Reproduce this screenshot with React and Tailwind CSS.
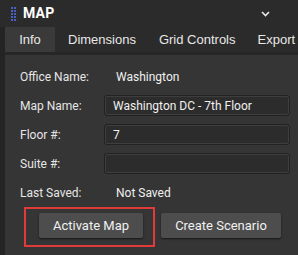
import React from "react";

function Grip() {
  const dots = [];
  for (let r = 0; r < 5; r++) {
    for (let c = 0; c < 2; c++) {
      dots.push(<rect key={r + "-" + c} x={c * 3} y={r * 3} width="2" height="2" fill="#4a5fc1" />);
    }
  }
  return (
    <svg width="5" height="14" viewBox="0 0 5 14">
      {dots}
    </svg>
  );
}

function Field({ label, value, input }) {
  return (
    <div className="flex items-center h-[29px]">
      <div className="w-[84px] shrink-0 text-[12px] text-[#e6e6e6]">{label}</div>
      {input ? (
        <div className="flex-1 h-[21px] rounded-[3px] border border-[#222] bg-[#2c2c2c] flex items-center px-[8px] text-[12px] text-[#f0f0f0] shadow-[inset_0_0_0_1px_#3e3e3e]">
          {value}
        </div>
      ) : (
        <div className="flex-1 pl-[12px] text-[12px] text-[#f0f0f0]">{value}</div>
      )}
    </div>
  );
}

export default function App() {
  return (
    <div
      className="w-[298px] h-[255px] bg-[#2b2b2b] flex flex-col overflow-hidden"
      style={{ fontFamily: "Roboto, 'Liberation Sans', sans-serif" }}
    >
      <div className="h-[27px] shrink-0 flex items-center pl-[11px] pr-[28px]">
        <Grip />
        <span className="ml-[7px] text-[14px] font-bold text-white tracking-[0.2px]">MAP</span>
        <svg className="ml-auto" width="9" height="6" viewBox="0 0 9 6">
          <path d="M1 1 L4.5 4.5 L8 1" stroke="#e8e8e8" strokeWidth="1.6" fill="none" />
        </svg>
      </div>
      <div className="flex-1 flex flex-col border-l-[5px] border-[#242424]">
        <div
          className="h-[28px] shrink-0 flex items-stretch text-[13px] text-[#e8e8e8] border-b-[3px] border-[#262626]"
          style={{ fontFamily: "'Liberation Sans', Arial, sans-serif" }}
        >
          <div className="w-[50px] bg-[#3a3a3a] flex items-center justify-center">Info</div>
          <div className="flex items-center pl-[13px]">Dimensions</div>
          <div className="flex items-center pl-[23px]">Grid Controls</div>
          <div className="flex items-center pl-[22px]">Export</div>
        </div>
        <div className="flex-1 bg-[#353535] pl-[15px] pr-[8px] pt-[7px]">
          <Field label="Office Name:" value="Washington" />
          <Field label="Map Name:" value="Washington DC - 7th Floor" input />
          <Field label="Floor #:" value="7" input />
          <Field label="Suite #:" value="" input />
          <Field label="Last Saved:" value="Not Saved" />
          <div className="flex items-start">
            <div className="ml-[4px] border-[2px] border-[#e03a3a] pl-[13px] pr-[10px] pt-[4px] pb-[7px]">
              <button className="w-[104px] h-[25px] rounded-[2px] bg-[#4d4d4d] text-[13px] text-[#f0f0f0] shadow-[0_1px_2px_rgba(0,0,0,0.6)]">
                Activate Map
              </button>
            </div>
            <button className="ml-[6px] mt-[6px] w-[120px] h-[25px] rounded-[2px] bg-[#4d4d4d] text-[13px] text-[#f0f0f0] shadow-[0_1px_2px_rgba(0,0,0,0.6)]">
              Create Scenario
            </button>
          </div>
        </div>
      </div>
    </div>
  );
}
